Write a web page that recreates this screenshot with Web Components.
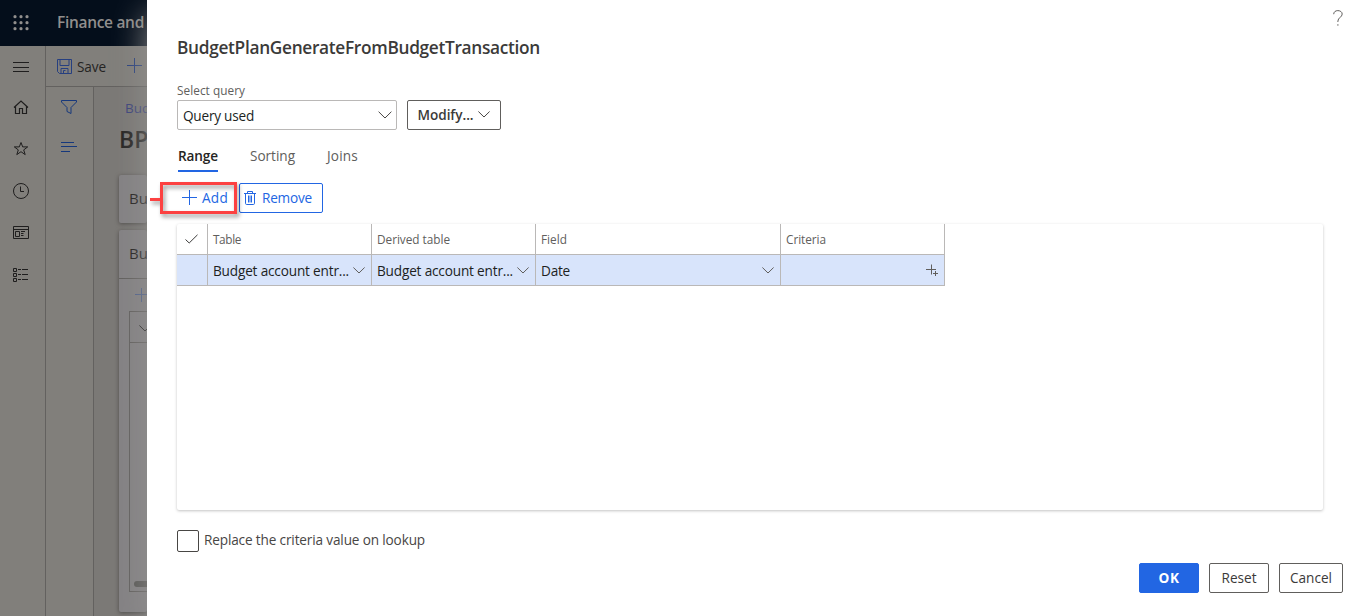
<!DOCTYPE html>
<html lang="en">
<head>
<meta charset="utf-8">
<title>Finance and Operations</title>
<style>
html,body{margin:0;height:100%;overflow:hidden;background:#fff}
body{font-family:"Open Sans","Noto Sans",sans-serif;font-size:13.6px;color:#3b3a39}
</style>
</head>
<body>
<app-root></app-root>
<script>
const define = (name, html, setup) => {
  const template = document.createElement('template');
  template.innerHTML = html;
  customElements.define(name, class extends HTMLElement {
    connectedCallback() {
      if (this.shadowRoot) return;
      this.attachShadow({mode: 'open'}).appendChild(template.content.cloneNode(true));
      if (setup) setup(this, this.shadowRoot);
    }
  });
};

/* Line icons, each on its own pixel grid. */
const ICONS = {
  waffle: [16, 16, [1, 7, 13].map(y => [1, 7, 13].map(x => `<circle cx="${x + 1}" cy="${y + .7}" r="1.6" fill="currentColor" stroke="none"/>`).join('')).join('')],
  menu: [16, 10, '<path d="M0 .5H16M0 5.500H16M0 9.500H16"/>'],
  home: [16, 14, '<path d="M1 7.500L8 1l7 6.500M2.500 6.500v7H6.500V8.500h3v5h4v-7" stroke-width="1.2"/>'],
  star: [16, 15, '<path d="M8 1.500l1.700 4.400h5l-4 3 1.500 4.700L8 10.700l-4.200 2.900 1.500-4.700-4-3h5z"/>'],
  clock: [16, 16, '<circle cx="8" cy="8" r="7.500"/><path d="M7.500 3.500v5H11"/>'],
  workspace: [16, 13, '<path d="M.5.500h15v12H.5zM.5 3.500h15M2.500 5.500h4v5h-4zM8 5.500h4M8 7.500h2.500M8 9.500h2.500"/>'],
  modules: [16, 14, '<path d="M.5.500h3v3h-3zM.5 5.500h3v3h-3zM.5 10.500h3v3h-3zM5 1.500h3M9 1.500h6M5 6.500h3M9 6.500h6M5 11.500h3M9 11.500h6"/>'],
  save: [15, 15, '<path d="M.5.500h14v14H2.500l-2-2zM3 .5v6h9v-6M4 14V9.500h7V14M6.500 14v-2.500h2"/>'],
  plus: [16, 16, '<path d="M0 7.500H15M7.500 0V15"/>'],
  plusSmall: [14, 14, '<path d="M0 6.500H14M6.500 0V14"/>'],
  filter: [16, 15, '<path d="M.5.500h15v1.500L10 7.500v6L6 11.500v-4L.5 2z"/>'],
  lines: [16, 10, '<path d="M0 .5h13M0 4.500h16M0 9.500h9"/>'],
  chevron: [14, 8, '<path d="M.6.700L7 7 13.400.700"/>'],
  chevronSmall: [12, 7, '<path d="M.4.500L6 6 11.600.500"/>'],
  check: [13, 10, '<path d="M.5 5.500l3.700 3.500L12.500.800"/>'],
  trash: [12, 14, '<path d="M0 2.500H12M3.500 2.500v-2h5v2M1.500 2.500v9.800q0 1.200 1.200 1.200h6.600q1.200 0 1.200-1.200V2.500M4.500 4.500v7M6 4.500v7M7.500 4.500v7"/>'],
  plusPlus: [13, 13, '<path d="M0 5.500H10M5.500.500V10.500"/><path d="M7 9.500H12M9.500 7V12"/>'],
  help: [10, 16, '<path d="M.7 4.200C.7 2 2.500.600 4.800.600s4.400 1.300 4.400 3.500c0 2.900-4.300 3.700-4.300 7v.9M4.900 14.200v1.500"/>']
};
define('ui-icon', '<style>:host{display:block;flex:none;line-height:0}svg{display:block;fill:none;stroke:currentColor;stroke-width:1;overflow:visible}</style><div></div>', (host, root) => {
  const [w, h, body] = ICONS[host.getAttribute('name')];
  root.querySelector('div').innerHTML = `<svg width="${w}" height="${h}" viewBox="0 0 ${w} ${h}">${body}</svg>`;
});

/* A label that tracks its letters so that its line takes the given width. */
define('fit-text', '<style>:host{display:block;flex:none;white-space:nowrap}span{display:inline-block}</style><span><slot></slot></span>', (host, root) => {
  const width = +host.getAttribute('w'), span = root.querySelector('span');
  const natural = span.getBoundingClientRect().width;
  host.style.width = width + 'px';
  span.style.letterSpacing = (width - natural) / host.textContent.length + 'px';
});

define('top-bar', `<style>
:host{display:flex;align-items:center;height:46px;background:#040e1b;color:#918f8d;padding-left:13px;font-weight:600;font-size:15.500px;box-sizing:border-box;padding-bottom:1px}
fit-text{margin-left:28px;padding-bottom:1px}
</style><ui-icon name="waffle"></ui-icon><fit-text w="87">Finance and</fit-text>`);

define('nav-rail', `<style>
:host{display:flex;flex-direction:column;align-items:center;box-sizing:border-box;flex:none;padding-right:3px;color:#1f1e1e;border-right:1px solid #63615f;width:46px}
div{display:flex;height:42px;align-items:center;flex:none}
</style><div><ui-icon name="menu"></ui-icon></div><div style="height:38px"><ui-icon name="home"></ui-icon></div><div style="height:44px"><ui-icon name="star"></ui-icon></div><div style="height:42px"><ui-icon name="clock"></ui-icon></div><div style="height:41px"><ui-icon name="workspace"></ui-icon></div><div style="height:44px"><ui-icon name="modules"></ui-icon></div>`);

define('back-page', `<style>
:host{display:flex;flex-direction:column;flex:1;min-width:0}
.bar{display:flex;align-items:center;height:40px;border-bottom:1px solid #63615f;padding-left:11px;color:#263f80;flex:none}
.bar fit-text{margin:1px 21px 0 5px;color:#252423}
.main{display:flex;flex:1;min-height:0}
.side{width:47px;border-right:1px solid #63615f;display:flex;flex-direction:column;align-items:flex-start;color:#16387c;padding:13px 0 0 15px;box-sizing:border-box;width:48px;flex:none}
.side ui-icon+ui-icon{margin-top:27px}
.content{flex:1;background:#7b7976;padding:11px 0 0 25px;overflow:hidden}
.crumb{line-height:20px;padding-left:6px;color:#39427c;font-size:13.500px}
.name{font-size:23px;font-weight:600;line-height:32px;height:32px;margin:5px 0 20px;color:#252423;white-space:nowrap}
.card{background:#848284;border-radius:2px;box-shadow:0 1px 4px #4c4a48;height:48px;line-height:47px;white-space:nowrap;font-size:15px;color:#1c1b1a;margin-bottom:7px;font-weight:500}
.card>span{padding-left:10px}
.big{height:382px}
.head{height:49px;border-bottom:1px solid #62605e;padding-left:10px;box-sizing:border-box}
.tool{height:32px;display:flex;align-items:center;padding-left:16px;color:#4c5f8c}
.list{margin-left:10px;height:281px;box-sizing:border-box;border:1px solid #62605e;border-right:0;display:flex;flex-direction:column}
.lh{border-bottom:1px solid #62605e;display:flex;align-items:center;padding:3px 0 0 9px;box-sizing:border-box;height:31px}
.thumb{margin:auto 0 4px 4px;height:6px;border-radius:3px 0 0 3px;background:#565553}
</style>
<div class="bar"><ui-icon name="save"></ui-icon><fit-text w="29">Save</fit-text><ui-icon name="plus"></ui-icon></div>
<div class="main"><div class="side"><ui-icon name="filter"></ui-icon><ui-icon name="lines"></ui-icon></div>
<div class="content"><div class="crumb">Bud</div><div class="name">BP</div>
<div class="card"><span>Bu</span></div>
<div class="card big"><div class="head">Bu</div><div class="tool"><ui-icon name="plusSmall"></ui-icon></div><div class="list"><div class="lh"><ui-icon name="chevronSmall"></ui-icon></div><div class="thumb"></div></div></div>
</div></div>`);

define('ui-button', `<style>
:host{display:flex;align-items:center;justify-content:center;box-sizing:border-box;height:30px;border:1px solid #605e5c;border-radius:2px;color:#3b3a39;background:#fff;line-height:28px}
:host([kind=primary]){background:#2266e3;border-color:#2266e3;color:#fff;font-weight:700}
:host([kind=link]){border-color:#2266e3;color:#2266e3}
:host([kind=plain]){border-color:transparent;color:#2266e3}
</style><slot></slot>`);

define('tab-item', `<style>
:host{display:block;height:27px;line-height:25px;color:#605e5c;border-bottom:2px solid transparent}
:host([selected]){font-weight:600;color:#252423;border-color:#2266e3}
</style><slot></slot>`);

define('call-out', `<style>
:host{position:absolute;left:3px;top:182px;display:flex;align-items:center;filter:drop-shadow(2px 3px 2px rgba(0,0,0,.4))}
i{width:10px;height:3px;background:#fc4141;margin-top:2px}
b{width:77px;height:32px;box-sizing:border-box;border:3px solid #fc4141}
</style><i></i><b></b>`);

define('grid-cell', `<style>
:host{display:flex;align-items:center;box-sizing:border-box;height:31px;width:164px;padding:0 6px 0 5px;border-right:1px solid #bab8b7;border-bottom:1px solid #bab8b7;justify-content:space-between;flex:none}
:host([size=mark]){width:31px;padding:0 1px 0 0;justify-content:center}
:host([size=wide]){width:245px}
</style><slot></slot>`);

define('query-grid', `<style>
:host{display:block;width:1146px;height:286px;box-shadow:0 1px 3px rgba(0,0,0,.24);border-radius:2px;background:#fff}
.row{display:flex}
.head{color:#605e5c;font-size:11.800px;font-weight:500}
.head ui-icon{color:#3b3a39}
.sel{color:#201f1e;width:768px;background:#d8e4fb}
.sel ui-icon{color:#605e5c}
.sel fit-text{padding-top:1px}
</style>
<div class="row head"><grid-cell size="mark"><ui-icon name="check"></ui-icon></grid-cell><grid-cell><fit-text w="28">Table</fit-text></grid-cell><grid-cell><fit-text w="73">Derived table</fit-text></grid-cell><grid-cell size="wide"><fit-text w="26">Field</fit-text></grid-cell><grid-cell><fit-text w="40">Criteria</fit-text></grid-cell></div>
<div class="row sel"><grid-cell size="mark"></grid-cell><grid-cell><fit-text w="136">Budget account entr...</fit-text><ui-icon name="chevronSmall"></ui-icon></grid-cell><grid-cell><fit-text w="136">Budget account entr...</fit-text><ui-icon name="chevronSmall"></ui-icon></grid-cell><grid-cell size="wide"><fit-text w="29">Date</fit-text><ui-icon name="chevronSmall"></ui-icon></grid-cell><grid-cell style="padding-right:5px"><span></span><ui-icon name="plusPlus"></ui-icon></grid-cell></div>`);

define('query-dialog', `<style>
:host{display:flex;flex-direction:column;position:absolute;left:147px;top:0;width:1215px;height:616px;box-sizing:border-box;padding:36px 19px 0 30px;background:#fff;box-shadow:0 14px 32px rgba(148,146,145,.95)}
.title{font-size:17.300px;font-weight:600;line-height:24px;height:24px}
.label{font-size:11.800px;line-height:18px;margin:21px 0 1px;color:#605e5c}
.query,.tabs,.tools,.check,.foot{display:flex}
.query{gap:10px}
.select{display:flex;align-items:center;justify-content:space-between;width:220px;height:30px;box-sizing:border-box;border:1px solid #bab8b7;border-radius:2px;padding:0 4px 0 5px;color:#201f1e}
.select fit-text{padding-top:2px;line-height:18px}
.select ui-icon,.query ui-button ui-icon{color:#484644}
.query ui-button ui-icon{margin:0 1px 2px 0}
.tabs{gap:31px;padding-left:1px;margin:13px 0 11px}
.tools{gap:2px;margin-bottom:11px}
.check{align-items:center;margin-top:20px;height:22px;gap:5px;color:#484644}
.check fit-text{padding-bottom:3px}
.box{width:22px;height:22px;box-sizing:border-box;border:1px solid #484644;border-radius:2px}
.foot{justify-content:flex-end;gap:10px;margin-top:11px}
.help{position:absolute;left:1186px;top:10px;color:#605e5c}
</style>
<div class="title"><fit-text w="363">BudgetPlanGenerateFromBudgetTransaction</fit-text></div>
<div class="label"><fit-text w="68">Select query</fit-text></div>
<div class="query"><div class="select"><fit-text w="71">Query used</fit-text><ui-icon name="chevron"></ui-icon></div>
<ui-button style="width:94px;font-weight:600;gap:4px"><fit-text w="56">Modify...</fit-text><ui-icon name="chevronSmall"></ui-icon></ui-button></div>
<div class="tabs"><tab-item selected><fit-text w="40">Range</fit-text></tab-item><tab-item style="margin-left:1px"><fit-text w="45">Sorting</fit-text></tab-item><tab-item style="margin-left:1px"><fit-text w="31">Joins</fit-text></tab-item></div>
<div class="tools"><ui-button kind="plain" style="width:60px;justify-content:flex-start;padding-left:4px;gap:4px"><ui-icon name="plus"></ui-icon><fit-text w="26">Add</fit-text></ui-button><ui-button kind="link" style="width:84px;justify-content:flex-start;padding-left:4px;gap:6px"><ui-icon name="trash"></ui-icon><fit-text w="50">Remove</fit-text></ui-button></div>
<query-grid></query-grid>
<div class="check"><div class="box"></div><fit-text w="221">Replace the criteria value on lookup</fit-text></div>
<div class="foot"><ui-button kind="primary" style="width:60px"><fit-text w="21">OK</fit-text></ui-button><ui-button style="width:60px"><fit-text w="35">Reset</fit-text></ui-button><ui-button style="width:64px"><fit-text w="42">Cancel</fit-text></ui-button></div>
<ui-icon class="help" name="help"></ui-icon>
<call-out></call-out>`);

define('app-root', `<style>
:host{display:block;position:relative;width:1362px;height:616px;overflow:hidden}
.back{width:147px;height:616px;display:flex;flex-direction:column;background:#817f7b;overflow:hidden}
.body{display:flex;flex:1;min-height:0}
</style>
<div class="back"><top-bar></top-bar><div class="body"><nav-rail></nav-rail><back-page></back-page></div></div>
<query-dialog></query-dialog>`);
</script>
</body>
</html>
